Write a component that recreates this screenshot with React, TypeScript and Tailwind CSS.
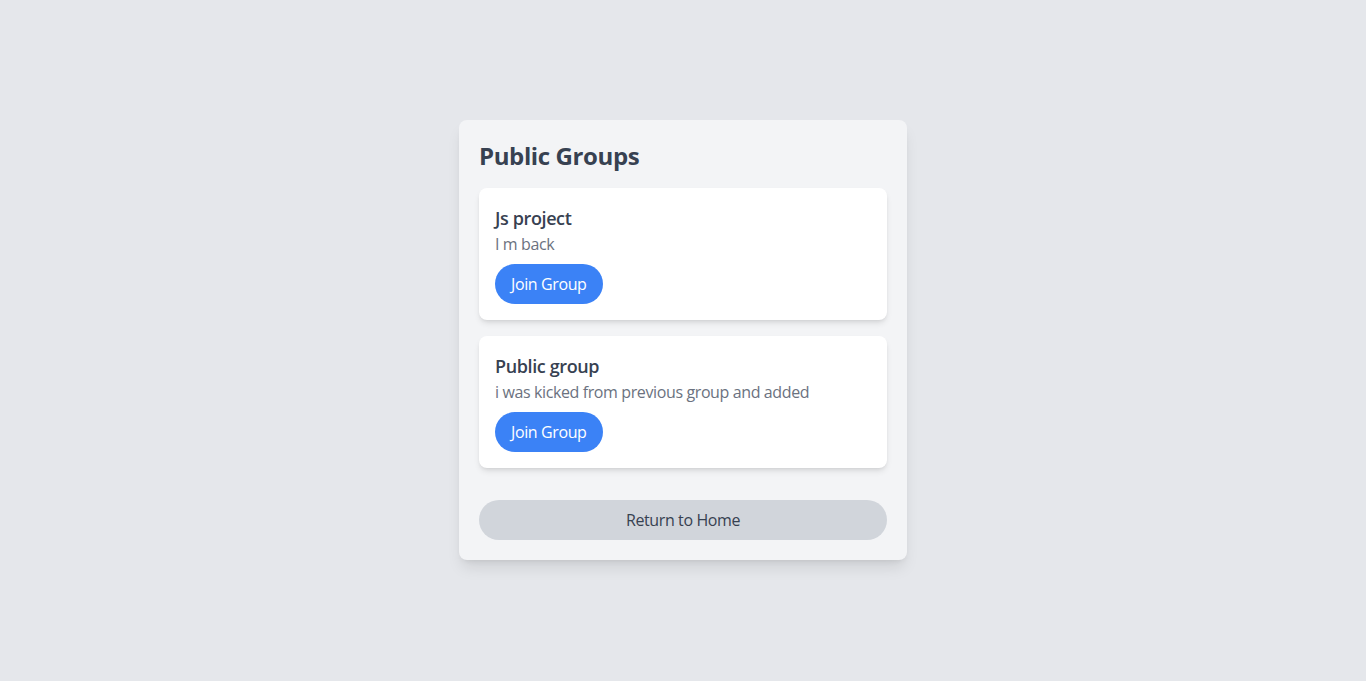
import React from "react";

const groups = [
  { name: "Js project", description: "I m back" },
  { name: "Public group", description: "i was kicked from previous group and added" },
];

export default function App() {
  return (
    <div
      className="min-h-screen bg-[#e5e7eb] flex items-center justify-center tracking-[-0.024em]"
      style={{ fontFamily: '"Open Sans", "Noto Sans", sans-serif' }}
    >
      <div className="w-full max-w-md bg-[#f3f4f6] rounded-lg shadow-lg p-5 -translate-y-px">
        <h1 className="text-2xl font-bold text-[#374151] mb-4">Public Groups</h1>
        <div className="space-y-4">
          {groups.map((g) => (
            <div key={g.name} className="bg-white rounded-lg shadow-md p-4">
              <h2 className="text-lg font-semibold text-[#374151]">{g.name}</h2>
              <p className="text-[#6b7280]">{g.description}</p>
              <button className="mt-2 px-4 py-2 rounded-full bg-[#3b82f6] text-white">Join Group</button>
            </div>
          ))}
        </div>
        <button className="mt-8 w-full py-2 rounded-full bg-[#d1d5db] text-[#374151]">Return to Home</button>
      </div>
    </div>
  );
}
